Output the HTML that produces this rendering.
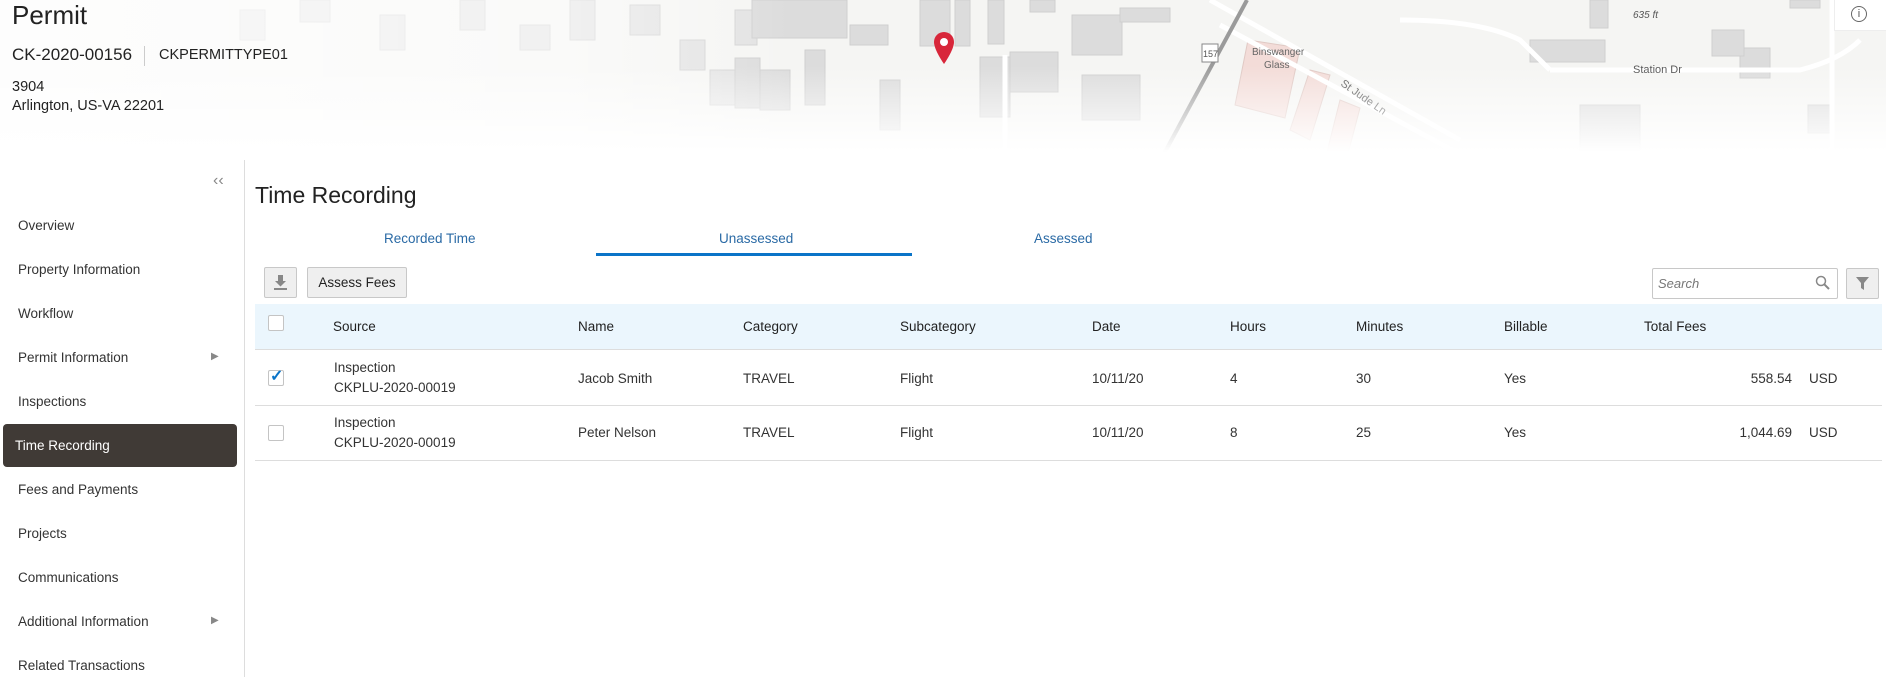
<!DOCTYPE html>
<html><head><meta charset="utf-8"><style>
*{margin:0;padding:0;box-sizing:border-box}
body{width:1886px;height:677px;overflow:hidden;background:#fff;font-family:"Liberation Sans",sans-serif;color:#333;position:relative}
.abs{position:absolute}
.map{left:0;top:0;width:1886px;height:165px;overflow:hidden}
.t{position:absolute;white-space:nowrap}
.side{font-size:13.5px;color:#333}
.hdr{font-size:13.5px;color:#222}
.cell{font-size:13.5px;color:#333}
.cb{position:absolute;width:16px;height:16px;border:1px solid #c4c4c4;border-radius:2px;background:#fff}
</style></head><body>
<div class="abs map">
<svg width="1886" height="165" viewBox="0 0 1886 165">
<rect x="0" y="0" width="1886" height="165" fill="#f5f5f3"/>
<g fill="#e2e2e2" stroke="#d2d2d2" stroke-width="1">
<rect x="240" y="10" width="25" height="30"/><rect x="300" y="0" width="30" height="22"/><rect x="380" y="15" width="25" height="35"/>
<rect x="460" y="0" width="25" height="30"/><rect x="520" y="25" width="30" height="25"/><rect x="570" y="0" width="25" height="40"/>
<rect x="630" y="5" width="30" height="30"/><rect x="680" y="40" width="25" height="30"/>
<rect x="735" y="10" width="22" height="35"/><rect x="710" y="70" width="25" height="35"/>
</g>
<g fill="#dcdcdc" stroke="#cfcfcf" stroke-width="1">
<rect x="752" y="0" width="95" height="38"/><rect x="850" y="25" width="38" height="20"/>
<rect x="920" y="0" width="30" height="46"/><rect x="955" y="0" width="15" height="46"/><rect x="988" y="0" width="16" height="44"/>
<rect x="1010" y="52" width="48" height="40"/><rect x="980" y="57" width="30" height="60"/>
<rect x="1082" y="75" width="58" height="45"/><rect x="1072" y="15" width="50" height="40"/>
<rect x="735" y="58" width="25" height="50"/><rect x="805" y="50" width="20" height="55"/>
<rect x="760" y="70" width="30" height="40"/><rect x="880" y="80" width="20" height="50"/>
<rect x="1120" y="8" width="50" height="14"/><rect x="1030" y="0" width="25" height="12"/>
<rect x="1530" y="40" width="75" height="22"/><rect x="1590" y="0" width="18" height="28"/>
<rect x="1740" y="48" width="30" height="30"/><rect x="1712" y="30" width="32" height="26"/>
<rect x="1808" y="105" width="22" height="28"/><rect x="1790" y="0" width="30" height="8"/>
<rect x="1580" y="105" width="60" height="45"/>
</g>
<g fill="#f3dcd8" stroke="#e0c9c4">
<polygon points="1248,40 1300,48 1285,118 1235,105"/>
<polygon points="1310,70 1330,75 1310,140 1290,130"/>
<polygon points="1340,100 1360,108 1345,165 1325,160"/>
</g>
<g stroke="#fff" stroke-width="5" fill="none">
<path d="M1210,0 L1460,140"/><path d="M1220,25 L1480,165"/>
<path d="M1550,70 Q1620,70 1680,70 L1800,70 Q1840,60 1860,40"/>
<path d="M1400,20 Q1480,20 1520,40 L1550,70"/>
<line x1="1832" y1="0" x2="1832" y2="165"/>
<line x1="1005" y1="55" x2="1005" y2="165"/>
</g>
<line x1="1247" y1="0" x2="1158" y2="165" stroke="#9a9a9a" stroke-width="4"/>
<rect x="1202" y="44" width="16" height="18" fill="#fff" stroke="#888"/>
<text x="1203" y="57" font-size="9" fill="#555" font-family="Liberation Sans">157</text>
<text x="1252" y="55" font-size="10" fill="#666" font-family="Liberation Sans">Binswanger</text>
<text x="1264" y="68" font-size="10" fill="#666" font-family="Liberation Sans">Glass</text>
<text x="1633" y="73" font-size="11" fill="#555" font-family="Liberation Sans">Station Dr</text>
<text x="1633" y="18" font-size="10" fill="#555" font-style="italic" font-family="Liberation Sans">635 ft</text>
<text x="1340" y="85" font-size="11" fill="#555" font-family="Liberation Sans" transform="rotate(35 1340 85)">St Jude Ln</text>
<text x="1803" y="163" font-size="11" fill="#ccc" font-family="Liberation Sans">Powered by Esri</text>
<defs>
<linearGradient id="lf" x1="0" x2="1" y1="0" y2="0"><stop offset="0" stop-color="#fff" stop-opacity="0.85"/><stop offset="0.3" stop-color="#fff" stop-opacity="0.5"/><stop offset="0.42" stop-color="#fff" stop-opacity="0"/></linearGradient>
<linearGradient id="bf" x1="0" x2="0" y1="0" y2="1"><stop offset="0.4" stop-color="#fff" stop-opacity="0"/><stop offset="0.92" stop-color="#fff" stop-opacity="1"/></linearGradient>
</defs>
<rect width="1886" height="165" fill="url(#lf)"/>
<rect width="1886" height="165" fill="url(#bf)"/>
<path d="M944,32 a10,10 0 0 1 10,10 c0,8 -10,22 -10,22 c0,0 -10,-14 -10,-22 a10,10 0 0 1 10,-10z" fill="#d8263a"/>
<circle cx="944" cy="42" r="4" fill="#fff"/>
</svg>
<div class="abs" style="left:1834px;top:0;width:52px;height:31px;background:#fff;border-left:1px solid #eee;border-bottom:1px solid #eee"></div>
<div class="abs" style="left:1851px;top:6px;width:16px;height:16px;border:1px solid #666;border-radius:50%;font-size:11px;text-align:center;line-height:14px;color:#555">i</div>
</div>
<div class="t" style="left:12px;top:0px;font-size:26px;color:#222">Permit</div>
<div class="t" style="left:12px;top:45px;font-size:17px;color:#222">CK-2020-00156</div>
<div class="abs" style="left:144px;top:46px;width:1px;height:20px;background:#ccc"></div>
<div class="t" style="left:159px;top:47px;font-size:14.5px;color:#222">CKPERMITTYPE01</div>
<div class="t" style="left:12px;top:79px;font-size:14.5px;color:#222">3904</div>
<div class="t" style="left:12px;top:98px;font-size:14.5px;color:#222">Arlington, US-VA 22201</div>

<div class="abs" style="left:244px;top:160px;width:1px;height:517px;background:#ddd"></div>
<div class="t" style="left:213px;top:172px;font-size:16px;color:#888">&#x2039;&#x2039;</div>
<div class="t side" style="left:18px;top:218px">Overview</div>
<div class="t side" style="left:18px;top:262px">Property Information</div>
<div class="t side" style="left:18px;top:306px">Workflow</div>
<div class="t side" style="left:18px;top:350px">Permit Information</div>
<div class="t" style="left:211px;top:351px;font-size:10px;color:#888">&#9654;</div>
<div class="t side" style="left:18px;top:394px">Inspections</div>
<div class="abs" style="left:3px;top:424px;width:234px;height:43px;background:#403a36;border-radius:4px"></div>
<div class="t side" style="left:15px;top:438px;color:#fff">Time Recording</div>
<div class="t side" style="left:18px;top:482px">Fees and Payments</div>
<div class="t side" style="left:18px;top:526px">Projects</div>
<div class="t side" style="left:18px;top:570px">Communications</div>
<div class="t side" style="left:18px;top:614px">Additional Information</div>
<div class="t" style="left:211px;top:615px;font-size:10px;color:#888">&#9654;</div>
<div class="t side" style="left:18px;top:658px">Related Transactions</div>

<div class="t" style="left:255px;top:182px;font-size:23px;color:#222">Time Recording</div>
<div class="t" style="left:384px;top:231px;font-size:13.5px;color:#2a6aa5">Recorded Time</div>
<div class="t" style="left:719px;top:231px;font-size:13.5px;color:#2a6aa5">Unassessed</div>
<div class="t" style="left:1034px;top:231px;font-size:13.5px;color:#2a6aa5">Assessed</div>
<div class="abs" style="left:596px;top:253px;width:316px;height:3px;background:#0a74c8"></div>

<div class="abs" style="left:264px;top:267px;width:33px;height:31px;background:#efefef;border:1px solid #c8c8c8;border-radius:2px"></div>
<svg class="abs" style="left:272px;top:274px" width="17" height="17" viewBox="0 0 17 17"><path d="M6,1h5v6h3l-5.5,5.5L3,7h3z" fill="#888"/><rect x="2" y="14" width="13" height="2" fill="#888"/></svg>
<div class="abs" style="left:307px;top:267px;width:100px;height:31px;background:#efefef;border:1px solid #c8c8c8;border-radius:2px;font-size:13.5px;text-align:center;line-height:29px;color:#222">Assess Fees</div>

<div class="abs" style="left:1652px;top:268px;width:186px;height:31px;border:1px solid #c8c8c8;border-radius:2px;background:#fff"></div>
<div class="t" style="left:1658px;top:276px;font-size:13px;color:#777;font-style:italic">Search</div>
<svg class="abs" style="left:1815px;top:275px" width="15" height="15" viewBox="0 0 15 15"><circle cx="6" cy="6" r="4.5" stroke="#888" stroke-width="1.5" fill="none"/><line x1="9.3" y1="9.3" x2="14" y2="14" stroke="#888" stroke-width="2"/></svg>
<div class="abs" style="left:1846px;top:268px;width:33px;height:31px;background:#efefef;border:1px solid #c8c8c8;border-radius:2px"></div>
<svg class="abs" style="left:1855px;top:276px" width="15" height="15" viewBox="0 0 15 15"><path d="M1,1h13l-5,6v7l-3,-2v-5z" fill="#888"/></svg>

<div class="abs" style="left:255px;top:304px;width:1627px;height:46px;background:#ebf6fd;border-bottom:1px solid #ddd"></div>
<div class="cb" style="left:268px;top:315px"></div>
<div class="t hdr" style="left:333px;top:319px">Source</div>
<div class="t hdr" style="left:578px;top:319px">Name</div>
<div class="t hdr" style="left:743px;top:319px">Category</div>
<div class="t hdr" style="left:900px;top:319px">Subcategory</div>
<div class="t hdr" style="left:1092px;top:319px">Date</div>
<div class="t hdr" style="left:1230px;top:319px">Hours</div>
<div class="t hdr" style="left:1356px;top:319px">Minutes</div>
<div class="t hdr" style="left:1504px;top:319px">Billable</div>
<div class="t hdr" style="left:1644px;top:319px">Total Fees</div>

<div class="cb" style="left:268px;top:370px"></div>
<div class="t" style="left:270px;top:366px;font-size:16px;color:#0a74c8;font-weight:bold">&#10003;</div>
<div class="t cell" style="left:334px;top:360px">Inspection</div>
<div class="t cell" style="left:334px;top:380px">CKPLU-2020-00019</div>
<div class="t cell" style="left:578px;top:371px">Jacob Smith</div>
<div class="t cell" style="left:743px;top:371px">TRAVEL</div>
<div class="t cell" style="left:900px;top:371px">Flight</div>
<div class="t cell" style="left:1092px;top:371px">10/11/20</div>
<div class="t cell" style="left:1230px;top:371px">4</div>
<div class="t cell" style="left:1356px;top:371px">30</div>
<div class="t cell" style="left:1504px;top:371px">Yes</div>
<div class="t cell" style="right:94px;top:371px">558.54</div>
<div class="t cell" style="left:1809px;top:371px">USD</div>
<div class="abs" style="left:255px;top:405px;width:1627px;height:1px;background:#ddd"></div>

<div class="cb" style="left:268px;top:425px"></div>
<div class="t cell" style="left:334px;top:415px">Inspection</div>
<div class="t cell" style="left:334px;top:435px">CKPLU-2020-00019</div>
<div class="t cell" style="left:578px;top:425px">Peter Nelson</div>
<div class="t cell" style="left:743px;top:425px">TRAVEL</div>
<div class="t cell" style="left:900px;top:425px">Flight</div>
<div class="t cell" style="left:1092px;top:425px">10/11/20</div>
<div class="t cell" style="left:1230px;top:425px">8</div>
<div class="t cell" style="left:1356px;top:425px">25</div>
<div class="t cell" style="left:1504px;top:425px">Yes</div>
<div class="t cell" style="right:94px;top:425px">1,044.69</div>
<div class="t cell" style="left:1809px;top:425px">USD</div>
<div class="abs" style="left:255px;top:460px;width:1627px;height:1px;background:#ddd"></div>
</body></html>
